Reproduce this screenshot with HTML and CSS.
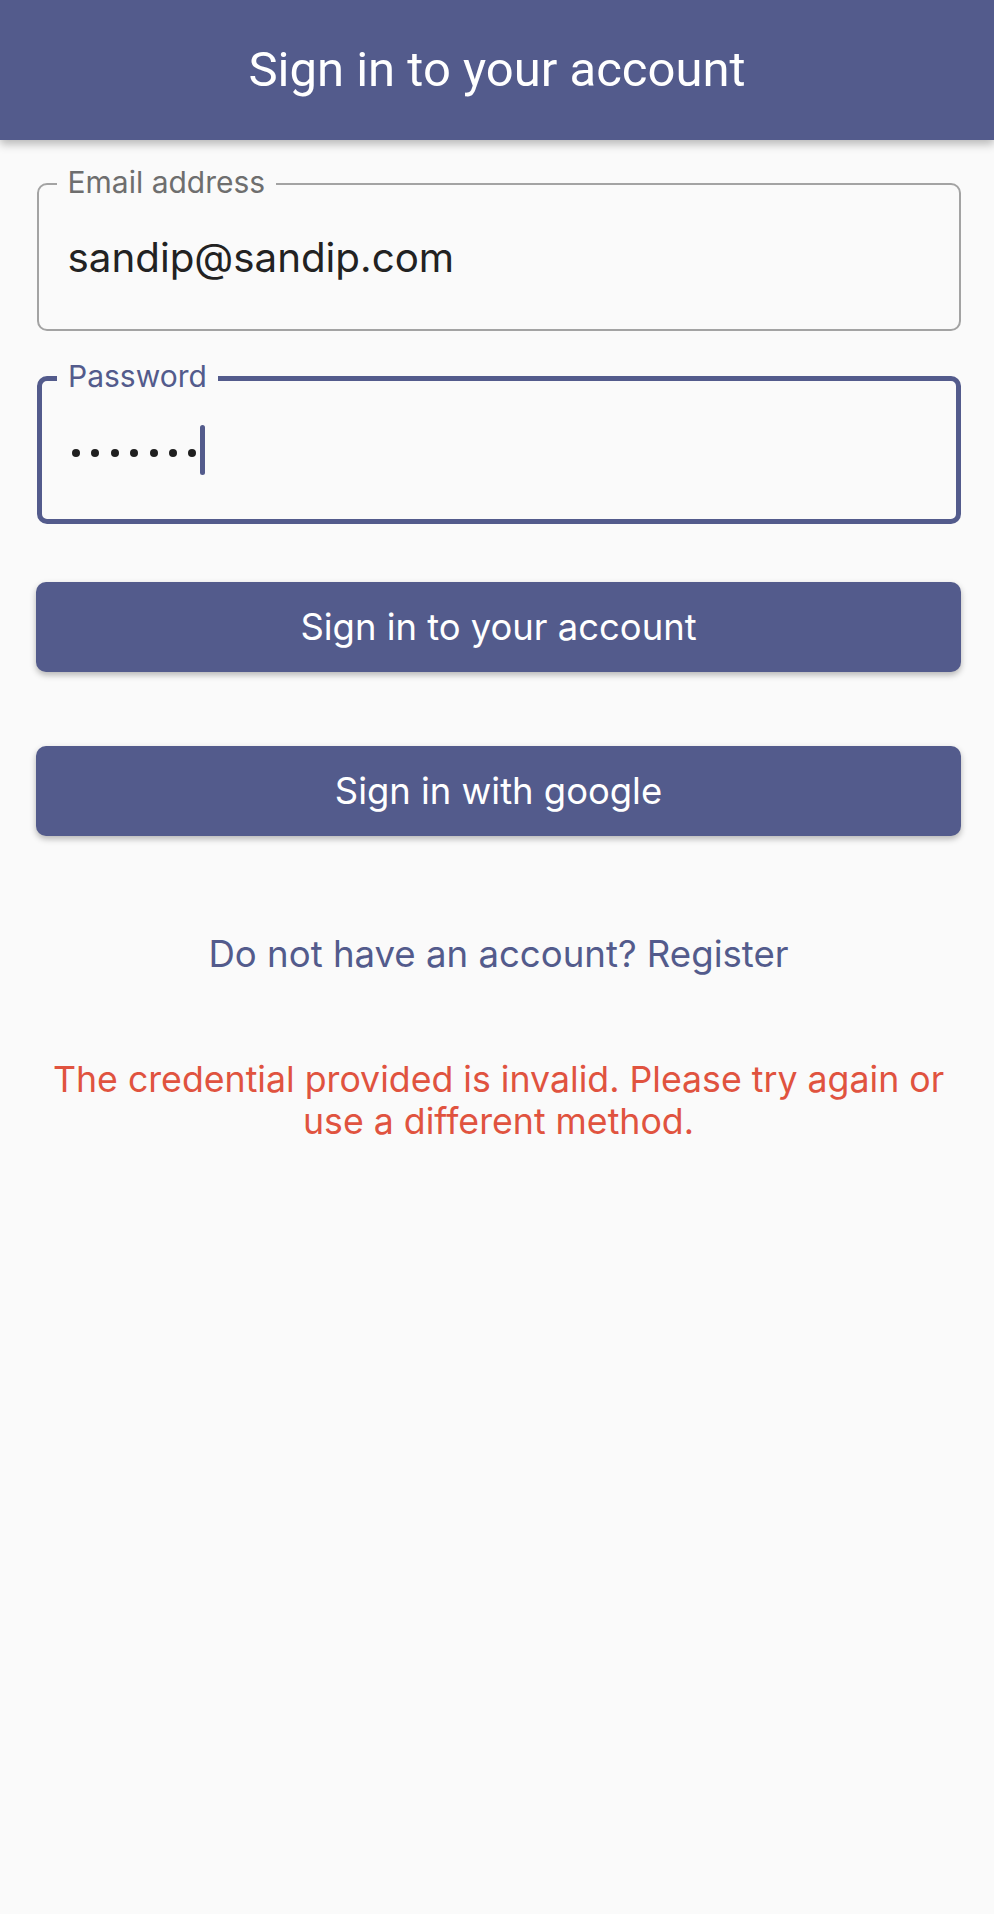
FILE: index.html
```html
<!DOCTYPE html>
<html lang="en">
<head>
<meta charset="utf-8">
<title>Sign in to your account</title>
<link rel="stylesheet" href="styles.css">
</head>
<body>
<header class="app-bar">
  <h1 class="app-title">Sign in to your account</h1>
</header>
<main class="content">
  <div class="field field-idle">
    <span class="field-label">Email address</span>
    <div class="field-value">sandip@sandip.com</div>
  </div>
  <div class="field field-focused">
    <span class="field-label">Password</span>
    <div class="field-value">
      <span class="dots" aria-label="password">
        <span class="dot"></span><span class="dot"></span><span class="dot"></span><span class="dot"></span><span class="dot"></span><span class="dot"></span><span class="dot"></span>
      </span>
      <span class="caret"></span>
    </div>
  </div>
  <button class="btn btn-first" type="button">Sign in to your account</button>
  <button class="btn btn-second" type="button">Sign in with google</button>
  <p class="register">Do not have an account? Register</p>
  <p class="error">The credential provided is invalid. Please try again or use a different method.</p>
</main>
</body>
</html>
```
FILE: styles.css
```css
html, body {
  margin: 0;
  padding: 0;
}
body {
  background: #fafafa;
  font-family: "Inter", "Noto Sans", sans-serif;
  min-height: 1914px;
}
.app-bar {
  height: 140px;
  background: #535b8c;
  display: flex;
  align-items: center;
  justify-content: center;
  box-shadow: 0 4px 9px rgba(0, 0, 0, 0.28);
  position: relative;
  z-index: 1;
}
.app-title {
  margin: 0 0 2px;
  font-family: "Roboto", sans-serif;
  font-weight: 400;
  font-size: 49px;
  color: #ffffff;
  line-height: 1;
}
.content {
  padding: 43px 33px 0 36px;
  display: flex;
  flex-direction: column;
}
.field {
  position: relative;
  box-sizing: border-box;
  height: 148px;
  border-radius: 10px;
  display: flex;
  align-items: center;
  margin-left: 1px;
}
.field-idle {
  border: 2.5px solid #a3a3a3;
  padding-left: 28.5px;
}
.field-focused {
  border: 5px solid #535b8c;
  padding-left: 26px;
  margin-top: 45px;
}
.field-label {
  position: absolute;
  top: 0;
  transform: translateY(-50%);
  background: #fafafa;
  padding: 0 11px;
  font-size: 30px;
  line-height: 1;
}
.field-idle .field-label {
  left: 17.5px;
  top: -3.5px;
  color: #6e6e6e;
}
.field-focused .field-label {
  left: 15px;
  top: -5px;
  color: #535b8c;
}
.field-value {
  font-size: 40.3px;
  color: #222222;
  display: flex;
  align-items: center;
}
.dots {
  display: flex;
  gap: 11.4px;
  margin-left: 4px;
  margin-top: 6px;
}
.dot {
  width: 8px;
  height: 8px;
  border-radius: 50%;
  background: #1f1f1f;
}
.caret {
  width: 5px;
  height: 50px;
  border-radius: 3px;
  background: #535b8c;
  margin-left: 3.5px;
}
.btn {
  height: 90px;
  border: none;
  border-radius: 10px;
  background: #535b8c;
  color: #ffffff;
  font-family: "Inter", "Noto Sans", sans-serif;
  font-size: 36.4px;
  font-weight: 400;
  box-shadow: 0 3px 6px rgba(0, 0, 0, 0.28);
  padding: 0;
}
.btn-first {
  margin-top: 58px;
}
.btn-second {
  margin-top: 74px;
}
.register {
  margin: 96px 0 0;
  text-align: center;
  font-size: 36.6px;
  line-height: 44px;
  color: #535b8c;
}
.error {
  margin: 82px 0 0;
  text-align: center;
  font-size: 35.7px;
  line-height: 42px;
  color: #e0533f;
}
```
